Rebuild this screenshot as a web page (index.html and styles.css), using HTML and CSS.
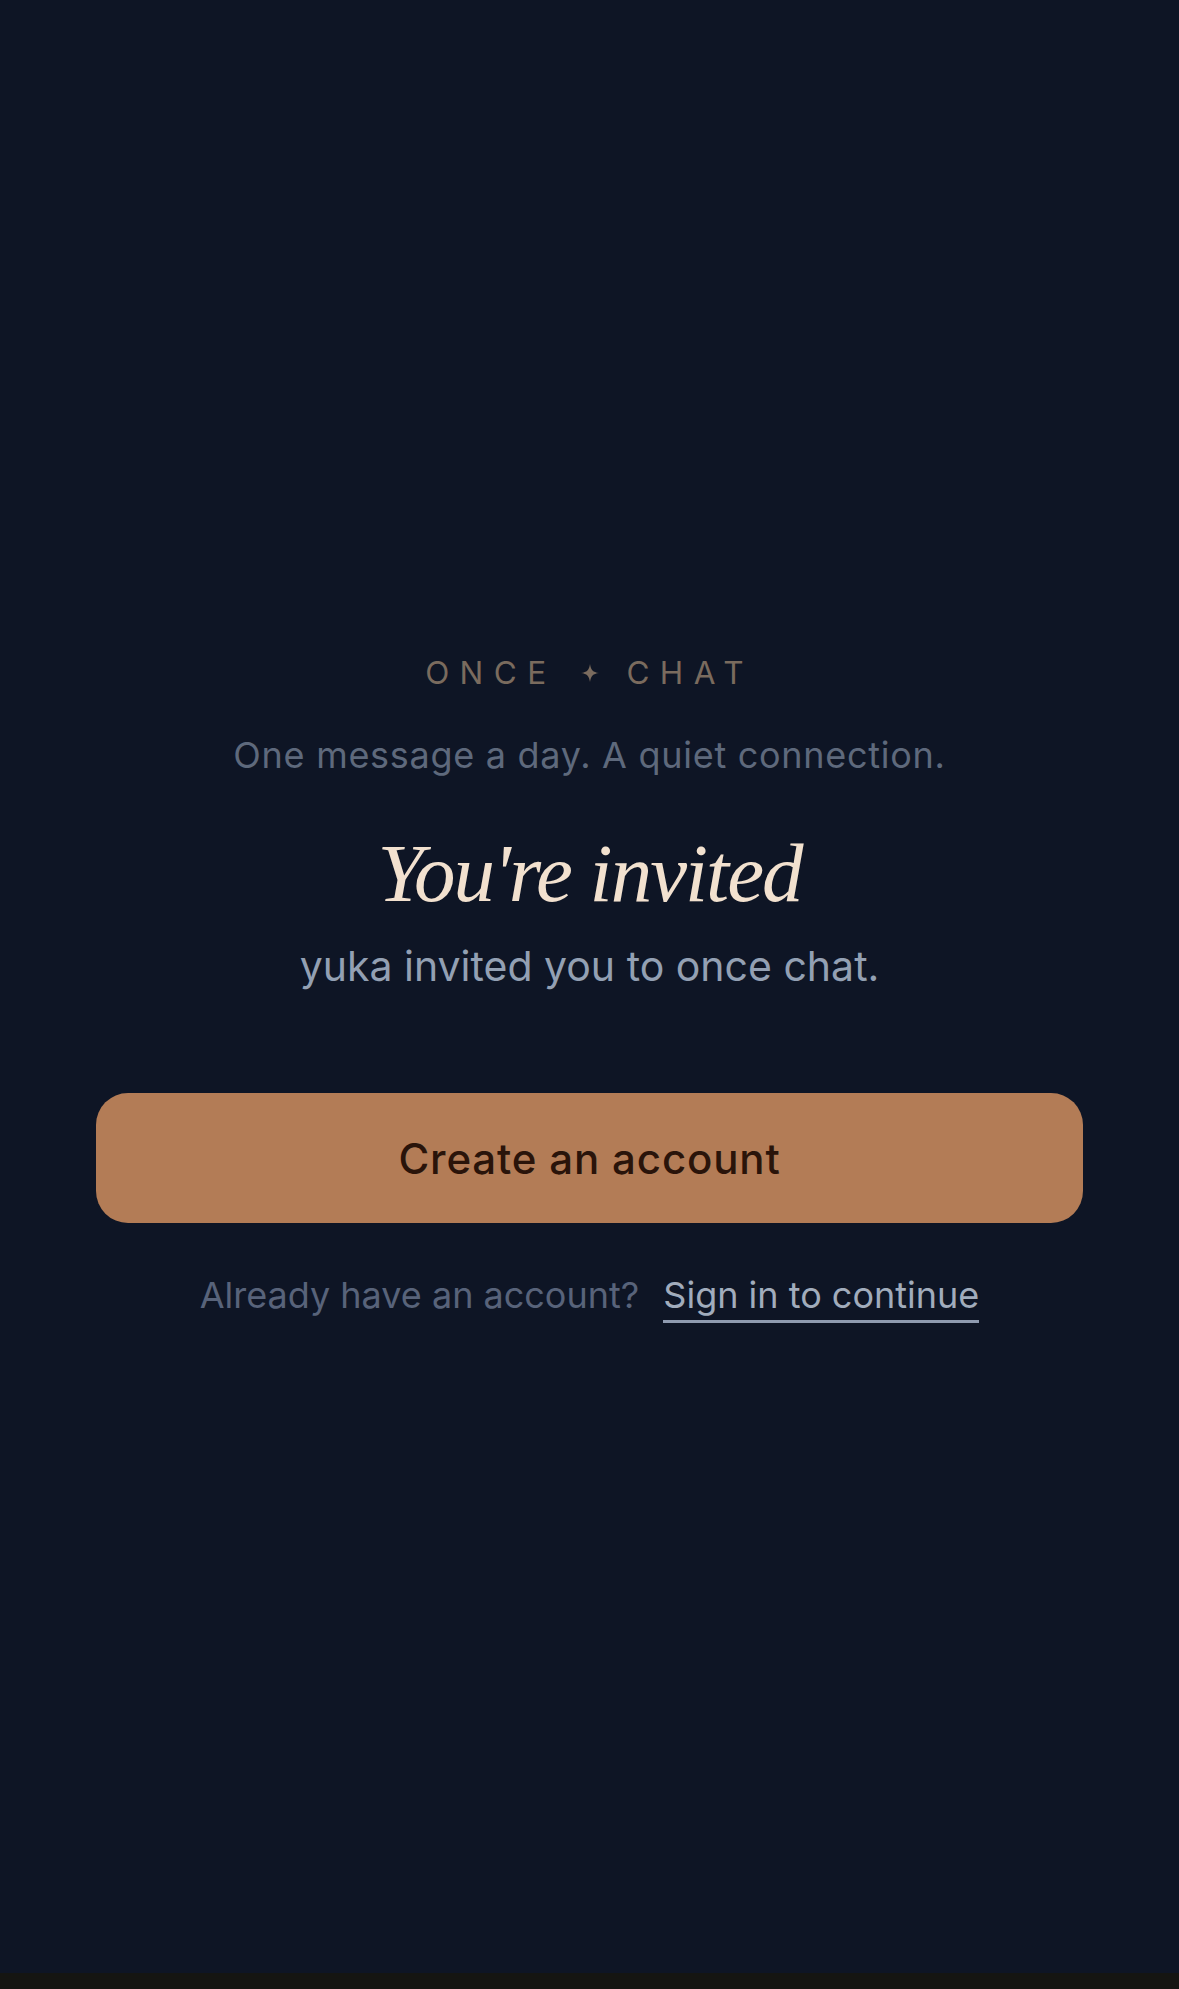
FILE: index.html
```html
<!DOCTYPE html>
<html lang="en">
<head>
  <meta charset="UTF-8" />
  <meta name="viewport" content="width=device-width, initial-scale=1.0" />
  <title>once chat - You're invited</title>
  <link rel="stylesheet" href="styles.css">
</head>
<body>
  <div class="screen">
    <main class="invite">
      <div class="brand">
        <span>ONCE</span>
        <svg class="spark" viewBox="0 0 20 20" aria-hidden="true">
          <path d="M10 1 C10.8 7 13 9.2 19 10 C13 10.8 10.8 13 10 19 C9.2 13 7 10.8 1 10 C7 9.2 9.2 7 10 1 Z" />
        </svg>
        <span>CHAT</span>
      </div>
      <p class="tagline">One message a day. A quiet connection.</p>

      <h1 class="title">You're invited</h1>
      <p class="from">yuka invited you to once chat.</p>

      <button class="primary">Create an account</button>

      <p class="signin">
        Already have an account?
        <a href="#">Sign in to continue</a>
      </p>
    </main>
    <div class="home-bar"></div>
  </div>
</body>
</html>
```

FILE: styles.css
```css
body {
  margin: 0;
  background-color: #0e1525;
  font-family: Inter, "Noto Sans", sans-serif;
}
.screen {
  min-height: 100vh;
  display: flex;
  flex-direction: column;
}
.invite {
  flex: 1;
  display: flex;
  flex-direction: column;
  align-items: center;
  padding: 650px 96px 0;
}
.brand {
  display: flex;
  align-items: center;
  gap: 24px;
  color: #7a6b5e;
  font-size: 31.5px;
  letter-spacing: 0.33em;
  line-height: 46px;
}
.spark {
  width: 20px;
  height: 20px;
  fill: #7a6b5e;
  margin-right: 2px;
}
.tagline {
  margin: 37px 0 0;
  color: #5e697c;
  font-size: 36px;
  letter-spacing: 0.02em;
}
.title {
  margin: 46px 0 0;
  color: #f2e1cf;
  font-family: "Liberation Serif", "DejaVu Serif", serif;
  font-style: italic;
  font-weight: 400;
  font-size: 83px;
  letter-spacing: -2px;
  line-height: 100px;
}
.from {
  margin: 18px 0 0;
  color: #93a0b3;
  font-size: 41px;
}
.primary {
  margin-top: 102px;
  width: 100%;
  height: 130px;
  border: none;
  border-radius: 32px;
  background-color: #b37c56;
  color: #2a140a;
  font-family: Inter, "Noto Sans", sans-serif;
  font-size: 42px;
  font-weight: 500;
  letter-spacing: 0.02em;
  cursor: pointer;
}
.signin {
  margin: 50px 0 0;
  color: #58637a;
  font-size: 36px;
}
.signin a {
  margin-left: 14px;
  color: #a1acbc;
  text-decoration: none;
  border-bottom: 3px solid #8f9bb0;
  padding-bottom: 3px;
}
.home-bar {
  height: 16px;
  background-color: #151512;
}
```
